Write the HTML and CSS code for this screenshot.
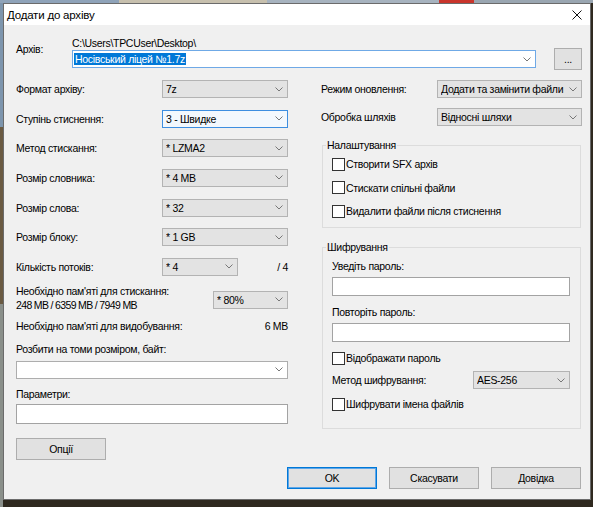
FILE: index.html
```html
<!DOCTYPE html>
<html lang="uk">
<head>
  <meta charset="UTF-8">
  <title>Додати до архіву</title>
  <link rel="stylesheet" href="styles.css">
</head>
<body>
  <div class="window">
    <div class="titlebar">
      <span class="title">Додати до архіву</span>
      <svg class="close" width="10" height="10" viewBox="0 0 10 10"><path d="M0.5 0.5L9.5 9.5M9.5 0.5L0.5 9.5" stroke="#111" stroke-width="1"/></svg>
    </div>
    <div class="client">
      <div class="archive">
        <span class="archive-label">Архів:</span>
        <div>
          <div class="path">C:\Users\TPCUser\Desktop\</div>
          <div class="combo edit active"><span class="value"><span class="sel">Носівський ліцей №1.7z</span></span><svg class="arrow" width="8" height="5" viewBox="0 0 8 5"><path d="M0.5 0.5L4 4L7.5 0.5" fill="none" stroke="#777"/></svg></div>
        </div>
        <button class="btn browse">...</button>
      </div>

      <div class="columns">
        <div class="left">
          <div class="rows">
            <div class="row"><span class="label">Формат архіву:</span><div class="combo"><span class="value">7z</span><svg class="arrow" width="8" height="5" viewBox="0 0 8 5"><path d="M0.5 0.5L4 4L7.5 0.5" fill="none" stroke="#777"/></svg></div></div>
            <div class="row"><span class="label">Ступінь стиснення:</span><div class="combo focused"><span class="value">3 - Швидке</span><svg class="arrow" width="8" height="5" viewBox="0 0 8 5"><path d="M0.5 0.5L4 4L7.5 0.5" fill="none" stroke="#777"/></svg></div></div>
            <div class="row"><span class="label">Метод стискання:</span><div class="combo"><span class="value">* LZMA2</span><svg class="arrow" width="8" height="5" viewBox="0 0 8 5"><path d="M0.5 0.5L4 4L7.5 0.5" fill="none" stroke="#777"/></svg></div></div>
            <div class="row"><span class="label">Розмір словника:</span><div class="combo"><span class="value">* 4 MB</span><svg class="arrow" width="8" height="5" viewBox="0 0 8 5"><path d="M0.5 0.5L4 4L7.5 0.5" fill="none" stroke="#777"/></svg></div></div>
            <div class="row"><span class="label">Розмір слова:</span><div class="combo"><span class="value">* 32</span><svg class="arrow" width="8" height="5" viewBox="0 0 8 5"><path d="M0.5 0.5L4 4L7.5 0.5" fill="none" stroke="#777"/></svg></div></div>
            <div class="row"><span class="label">Розмір блоку:</span><div class="combo"><span class="value">* 1 GB</span><svg class="arrow" width="8" height="5" viewBox="0 0 8 5"><path d="M0.5 0.5L4 4L7.5 0.5" fill="none" stroke="#777"/></svg></div></div>
            <div class="row"><span class="label">Кількість потоків:</span><div class="combo threads"><span class="value">* 4</span><svg class="arrow" width="8" height="5" viewBox="0 0 8 5"><path d="M0.5 0.5L4 4L7.5 0.5" fill="none" stroke="#777"/></svg></div><span class="of">/ 4</span></div>
          </div>

          <div class="memory">
            <div>Необхідно пам'яті для стискання:<br><span class="mem-values">248 MB / 6359 MB / 7949 MB</span></div>
            <div class="combo percent"><span class="value">* 80%</span><svg class="arrow" width="8" height="5" viewBox="0 0 8 5"><path d="M0.5 0.5L4 4L7.5 0.5" fill="none" stroke="#777"/></svg></div>
          </div>
          <div class="extract"><span>Необхідно пам'яті для видобування:</span><span>6 MB</span></div>

          <div class="split-label">Розбити на томи розміром, байт:</div>
          <div class="combo edit split"><span class="value"></span><svg class="arrow" width="8" height="5" viewBox="0 0 8 5"><path d="M0.5 0.5L4 4L7.5 0.5" fill="none" stroke="#777"/></svg></div>

          <div class="params-label">Параметри:</div>
          <div class="input params"></div>

          <button class="btn options">Опції</button>
        </div>

        <div class="right">
          <div class="right-row"><span class="label">Режим оновлення:</span><div class="combo wide"><span class="value">Додати та замінити файли</span><svg class="arrow" width="8" height="5" viewBox="0 0 8 5"><path d="M0.5 0.5L4 4L7.5 0.5" fill="none" stroke="#777"/></svg></div></div>
          <div class="right-row second"><span class="label">Обробка шляхів</span><div class="combo wide"><span class="value">Відносні шляхи</span><svg class="arrow" width="8" height="5" viewBox="0 0 8 5"><path d="M0.5 0.5L4 4L7.5 0.5" fill="none" stroke="#777"/></svg></div></div>

          <fieldset class="group">
            <legend>Налаштування</legend>
            <div class="checks">
              <div class="check"><span class="box"></span>Створити SFX архів</div>
              <div class="check"><span class="box"></span>Стискати спільні файли</div>
              <div class="check"><span class="box"></span>Видалити файли після стиснення</div>
            </div>
          </fieldset>

          <fieldset class="group crypt">
            <legend>Шифрування</legend>
            <div class="pw-label">Уведіть пароль:</div>
            <div class="input pw"></div>
            <div class="pw-label again">Повторіть пароль:</div>
            <div class="input pw"></div>
            <div class="check show"><span class="box"></span>Відображати пароль</div>
            <div class="method"><span>Метод шифрування:</span><div class="combo aes"><span class="value">AES-256</span><svg class="arrow" width="8" height="5" viewBox="0 0 8 5"><path d="M0.5 0.5L4 4L7.5 0.5" fill="none" stroke="#777"/></svg></div></div>
            <div class="check names"><span class="box"></span>Шифрувати імена файлів</div>
          </fieldset>
        </div>
      </div>

      <div class="footer">
        <button class="btn default">OK</button>
        <button class="btn">Скасувати</button>
        <button class="btn">Довідка</button>
      </div>
    </div>
  </div>
</body>
</html>
```

FILE: styles.css
```css
* {
  box-sizing: border-box;
}
html, body {
  margin: 0;
  height: 100%;
}
body {
  overflow: hidden;
  font-family: "Liberation Sans", Arial, sans-serif;
  font-size: 10.5px;
  letter-spacing: -0.3px;
  line-height: 14px;
  color: #000;
  background:
    linear-gradient(to right, #8fa3b9 0 20%, #c7c0ae 20% 45%, #a7b3bf 45% 74%, #c9352c 74% 80%, #9aa6b1 80%) top left / 100% 3px no-repeat,
    linear-gradient(to bottom, #7d95ad 0 25%, #6a5a42 25% 60%, #8a8f8a 60%) top left / 3px 100% no-repeat,
    #2f291f;
}

/* dialog frame */
.window {
  margin: 3px 0 0 3px;
  width: 588px;
  height: 497px;
  border: 1px solid #6b6b6b;
  background: #f0f0f0;
  display: flex;
  flex-direction: column;
}
.titlebar {
  height: 21px;
  flex: none;
  background: #fff;
  display: flex;
  align-items: center;
  justify-content: space-between;
  padding: 0 8px 0 3px;
}
.title {
  font-size: 11.5px;
  letter-spacing: -0.2px;
}
.client {
  flex: 1;
  padding: 11px 8px 0 12px;
}

/* archive name */
.archive {
  display: grid;
  grid-template-columns: 56px 464px 1fr;
  align-items: start;
}
.archive-label {
  padding-top: 6px;
}
.path {
  height: 14px;
}
.browse {
  justify-self: end;
  width: 28px;
  margin-top: 12px;
  height: 22px;
  color: #555;
  padding-top: 4px;
}

/* controls */
.combo {
  height: 18px;
  border: 1px solid #b3b3b3;
  background: #e3e3e3;
  display: flex;
  align-items: center;
  padding: 0 4px 0 3px;
}
.combo .value {
  flex: 1;
  overflow: hidden;
  white-space: nowrap;
}
.combo .arrow {
  flex: none;
  margin-left: 2px;
}
.combo.focused {
  background: #f3f8fd;
  border-color: #3d8ee0;
}
.combo.edit {
  background: #fff;
  border-color: #adadad;
  padding-left: 1px;
}
.combo.active {
  border-color: #6fa9e6;
}
.sel {
  background: #0078d7;
  color: #fff;
  padding: 0 1px;
}
.input {
  height: 20px;
  border: 1px solid #a3a3a3;
  background: #fff;
}
.btn {
  font: inherit;
  letter-spacing: inherit;
  color: #000;
  height: 22px;
  border: 1px solid #adadad;
  background: #e1e1e1;
  padding: 0;
}
.btn.default {
  border-color: #0078d7;
  box-shadow: inset 0 0 0 1px #5ea6e8;
}
.box {
  width: 13px;
  height: 13px;
  border: 1px solid #333;
  background: #fff;
  margin-right: 1px;
  flex: none;
}
.check {
  display: flex;
  align-items: center;
  height: 14px;
}

/* two columns */
.columns {
  display: grid;
  grid-template-columns: 272px 262px;
  column-gap: 32px;
  margin-top: 10px;
  align-items: start;
}
.rows {
  display: flex;
  flex-direction: column;
  gap: 11.67px;
}
.row {
  display: flex;
  align-items: center;
  height: 18px;
}
.row .label {
  width: 146px;
}
.row .combo {
  width: 126px;
}
.row .combo.threads {
  width: 76px;
}
.of {
  margin-left: auto;
}
.memory {
  margin-top: 8px;
  display: flex;
  justify-content: space-between;
}
.mem-values {
  letter-spacing: -0.65px;
}
.combo.percent {
  width: 75px;
  margin-top: 7px;
}
.extract {
  margin-top: 7px;
  display: flex;
  justify-content: space-between;
}
.split-label {
  margin-top: 9px;
}
.combo.split {
  margin-top: 5px;
}
.params-label {
  margin-top: 8px;
}
.params {
  margin-top: 3px;
}
.options {
  margin-top: 14px;
  width: 90px;
}

.right-row {
  display: flex;
  align-items: center;
  height: 18px;
  padding-left: 1px;
}
.right-row .label {
  flex: 1;
}
.right-row.second {
  margin-top: 10px;
}
.combo.wide {
  width: 145px;
}

/* group boxes */
.group {
  margin: 12px 1px 0 2px;
  padding: 0 10px 9px 9px;
  border: 1px solid #dcdcdc;
  min-width: 0;
}
.group legend {
  margin-left: -6px;
  padding: 0 1px;
  line-height: 14px;
}
.checks {
  margin-top: 5px;
  display: flex;
  flex-direction: column;
  gap: 9.5px;
}
.crypt {
  padding-bottom: 17px;
}
.pw-label {
  margin-top: 5px;
}
.pw-label.again {
  margin-top: 9px;
}
.pw {
  height: 19px;
  margin-top: 4px;
}
.check.show {
  margin-top: 9px;
}
.method {
  margin-top: 6px;
  height: 18px;
  display: flex;
  align-items: center;
  justify-content: space-between;
}
.combo.aes {
  width: 97px;
}
.check.names {
  margin-top: 8px;
}

/* dialog buttons */
.footer {
  margin-top: 7px;
  display: flex;
  justify-content: flex-end;
  gap: 12px;
  padding-right: 1px;
}
.footer .btn {
  width: 90px;
}
```
